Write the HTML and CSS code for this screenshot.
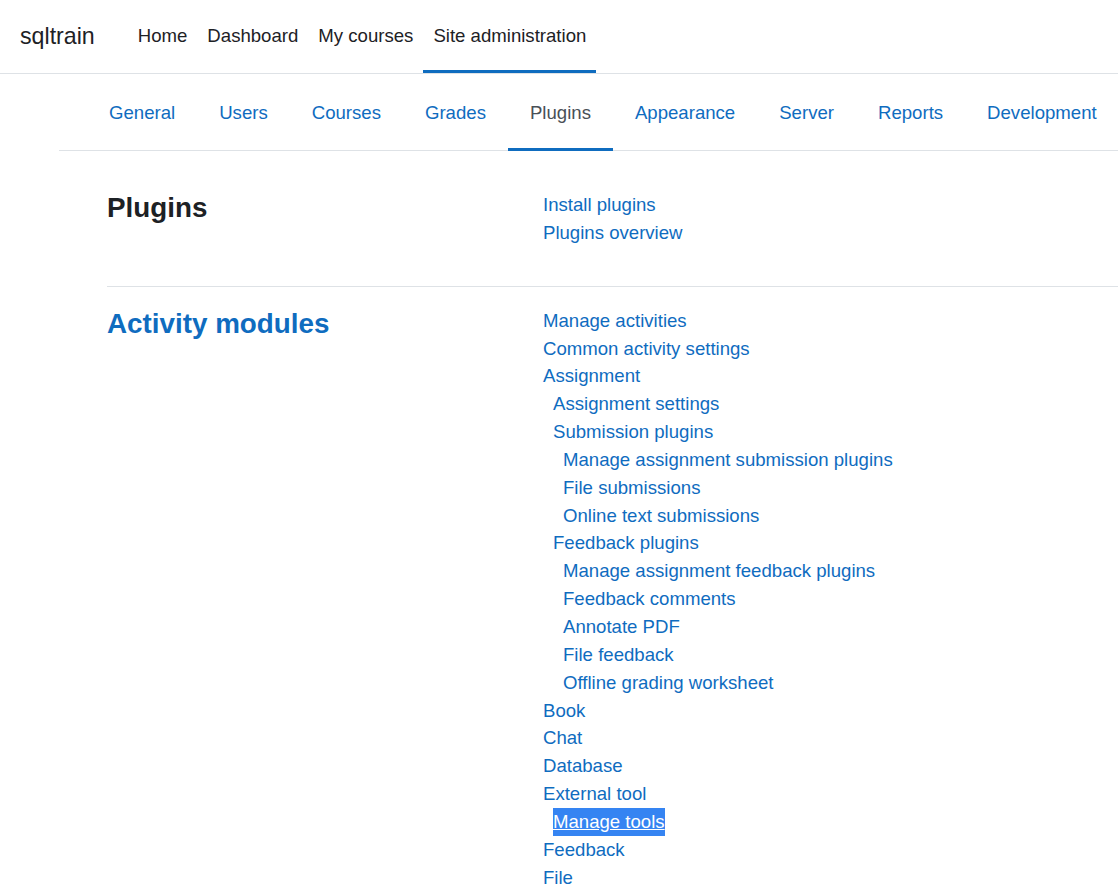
FILE: index.html
```html
<!DOCTYPE html>
<html lang="en">
<head>
    <meta charset="UTF-8">
    <meta name="viewport" content="width=device-width, initial-scale=1.0">
    <title>Plugins: Site administration | sqltrain</title>
    <link rel="stylesheet" href="styles.css">
</head>
<body>
    <nav class="navbar">
        <a class="brand" href="#">sqltrain</a>
        <ul class="primary-nav">
            <li><a href="#">Home</a></li>
            <li><a href="#">Dashboard</a></li>
            <li><a href="#">My courses</a></li>
            <li><a href="#" class="active">Site administration</a></li>
        </ul>
    </nav>

    <div class="page">
        <ul class="secondary-nav">
            <li><a href="#">General</a></li>
            <li><a href="#">Users</a></li>
            <li><a href="#">Courses</a></li>
            <li><a href="#">Grades</a></li>
            <li><a href="#" class="active">Plugins</a></li>
            <li><a href="#">Appearance</a></li>
            <li><a href="#">Server</a></li>
            <li><a href="#">Reports</a></li>
            <li><a href="#">Development</a></li>
        </ul>

        <div class="content">
            <section class="category">
                <h3 class="plain">Plugins</h3>
                <ul class="links">
                    <li><a href="#">Install plugins</a></li>
                    <li><a href="#">Plugins overview</a></li>
                </ul>
            </section>

            <section class="category">
                <h3><a href="#">Activity modules</a></h3>
                <ul class="links">
                    <li><a href="#">Manage activities</a></li>
                    <li><a href="#">Common activity settings</a></li>
                    <li><a href="#">Assignment</a>
                        <ul>
                            <li><a href="#">Assignment settings</a></li>
                            <li><a href="#">Submission plugins</a>
                                <ul>
                                    <li><a href="#">Manage assignment submission plugins</a></li>
                                    <li><a href="#">File submissions</a></li>
                                    <li><a href="#">Online text submissions</a></li>
                                </ul>
                            </li>
                            <li><a href="#">Feedback plugins</a>
                                <ul>
                                    <li><a href="#">Manage assignment feedback plugins</a></li>
                                    <li><a href="#">Feedback comments</a></li>
                                    <li><a href="#">Annotate PDF</a></li>
                                    <li><a href="#">File feedback</a></li>
                                    <li><a href="#">Offline grading worksheet</a></li>
                                </ul>
                            </li>
                        </ul>
                    </li>
                    <li><a href="#">Book</a></li>
                    <li><a href="#">Chat</a></li>
                    <li><a href="#">Database</a></li>
                    <li><a href="#">External tool</a>
                        <ul>
                            <li><a href="#" class="selected">Manage tools</a></li>
                        </ul>
                    </li>
                    <li><a href="#">Feedback</a></li>
                    <li><a href="#">File</a></li>
                    <li><a href="#">Folder</a></li>
                    <li><a href="#">Forum</a></li>
                </ul>
            </section>
        </div>
    </div>
</body>
</html>
```

FILE: styles.css
```css
:root {
    --link: #0f6cbf;
    --text: #1d2125;
    --muted: #495057;
    --border: #dee2e6;
    --highlight: #3584f2;
}

* {
    margin: 0;
    padding: 0;
    box-sizing: border-box;
}

html, body {
    height: 100%;
    overflow: hidden;
}

body {
    font-family: "Liberation Sans", Arial, sans-serif;
    font-size: 18.6px;
    line-height: 27.85px;
    color: var(--text);
    background: white;
}

a {
    color: var(--link);
    text-decoration: none;
}

ul {
    list-style: none;
}

/* top bar */
.navbar {
    display: flex;
    align-items: stretch;
    height: 74px;
    padding-left: 20px;
    border-bottom: 1px solid var(--border);
}

.brand {
    display: flex;
    align-items: center;
    font-size: 23.2px;
    color: var(--text);
    margin-right: 33px;
    padding-top: 1px;
}

.primary-nav {
    display: flex;
}

.primary-nav a {
    display: flex;
    align-items: center;
    height: 100%;
    padding: 1px 10px 0;
    color: var(--text);
    border-bottom: 3px solid transparent;
}

.primary-nav a.active {
    border-bottom-color: var(--link);
}

/* secondary nav */
.page {
    padding-left: 59px;
}

.secondary-nav {
    display: flex;
    height: 77px;
    padding-left: 28px;
    border-bottom: 1px solid var(--border);
    white-space: nowrap;
}

.secondary-nav li {
    display: flex;
}

.secondary-nav a {
    display: flex;
    align-items: center;
    padding: 4px 22px 0;
    margin-bottom: -1px;
    border-bottom: 3px solid transparent;
}

.secondary-nav a.active {
    color: var(--muted);
    border-bottom-color: var(--link);
}

/* categories */
.content {
    padding: 20px 0 0 48px;
}

.category {
    display: grid;
    grid-template-columns: 436px 1fr;
    padding: 20px 0 20px;
}

.category + .category {
    border-top: 1px solid var(--border);
}

.category:first-child {
    padding-bottom: 39px;
}

.category h3 {
    font-size: 27.8px;
    font-weight: bold;
    line-height: 1.2;
}

.category h3.plain {
    color: var(--text);
}

.links ul {
    padding-left: 10px;
}

.links a {
    display: inline-block;
}

.links a.selected {
    background: var(--highlight);
    color: white;
    text-decoration: underline;
}
```
